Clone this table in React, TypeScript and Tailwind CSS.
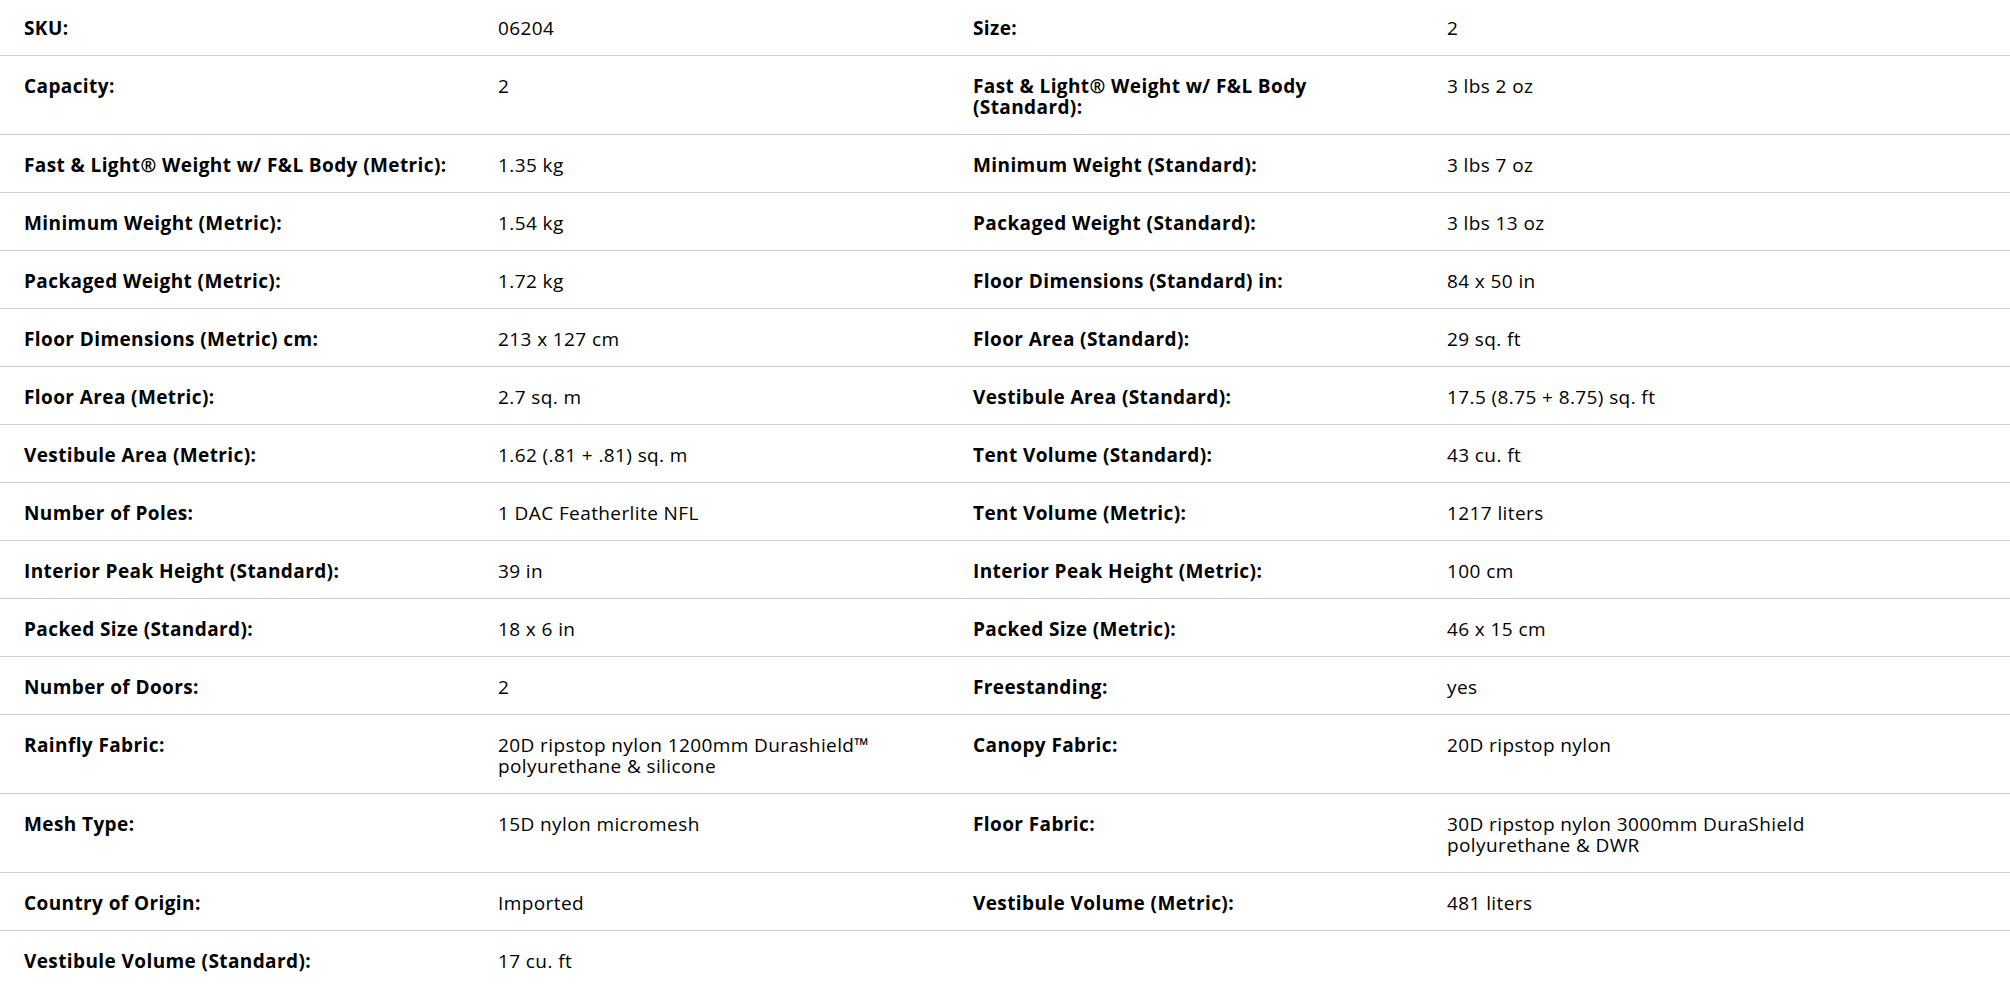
const specs: [string, string, string, string][] = [
  ['SKU:', '06204', 'Size:', '2'],
  ['Capacity:', '2', 'Fast & Light® Weight w/ F&L Body (Standard):', '3 lbs 2 oz'],
  ['Fast & Light® Weight w/ F&L Body (Metric):', '1.35 kg', 'Minimum Weight (Standard):', '3 lbs 7 oz'],
  ['Minimum Weight (Metric):', '1.54 kg', 'Packaged Weight (Standard):', '3 lbs 13 oz'],
  ['Packaged Weight (Metric):', '1.72 kg', 'Floor Dimensions (Standard) in:', '84 x 50 in'],
  ['Floor Dimensions (Metric) cm:', '213 x 127 cm', 'Floor Area (Standard):', '29 sq. ft'],
  ['Floor Area (Metric):', '2.7 sq. m', 'Vestibule Area (Standard):', '17.5 (8.75 + 8.75) sq. ft'],
  ['Vestibule Area (Metric):', '1.62 (.81 + .81) sq. m', 'Tent Volume (Standard):', '43 cu. ft'],
  ['Number of Poles:', '1 DAC Featherlite NFL', 'Tent Volume (Metric):', '1217 liters'],
  ['Interior Peak Height (Standard):', '39 in', 'Interior Peak Height (Metric):', '100 cm'],
  ['Packed Size (Standard):', '18 x 6 in', 'Packed Size (Metric):', '46 x 15 cm'],
  ['Number of Doors:', '2', 'Freestanding:', 'yes'],
  ['Rainfly Fabric:', '20D ripstop nylon 1200mm Durashield™ polyurethane & silicone', 'Canopy Fabric:', '20D ripstop nylon'],
  ['Mesh Type:', '15D nylon micromesh', 'Floor Fabric:', '30D ripstop nylon 3000mm DuraShield polyurethane & DWR'],
  ['Country of Origin:', 'Imported', 'Vestibule Volume (Metric):', '481 liters'],
  ['Vestibule Volume (Standard):', '17 cu. ft', '', ''],
];

export default function App() {
  return (
    <div className="min-h-screen bg-white font-['Open_Sans',sans-serif] text-[19px] leading-[21px] tracking-[0.4px] text-black">
      {specs.map((row, i) => (
        <div
          key={i}
          className={`grid grid-cols-[474px_475px_474px_474px] ${
            i < specs.length - 1 ? 'border-b border-[#d0d0d0]' : ''
          } ${i === 0 ? 'pt-[18px]' : 'pt-[20px]'} pb-4`}
        >
          <div className="px-6 font-bold">{row[0]}</div>
          <div className="px-6">{row[1]}</div>
          <div className="px-6 font-bold">{row[2]}</div>
          <div className="px-6">{row[3]}</div>
        </div>
      ))}
    </div>
  );
}
